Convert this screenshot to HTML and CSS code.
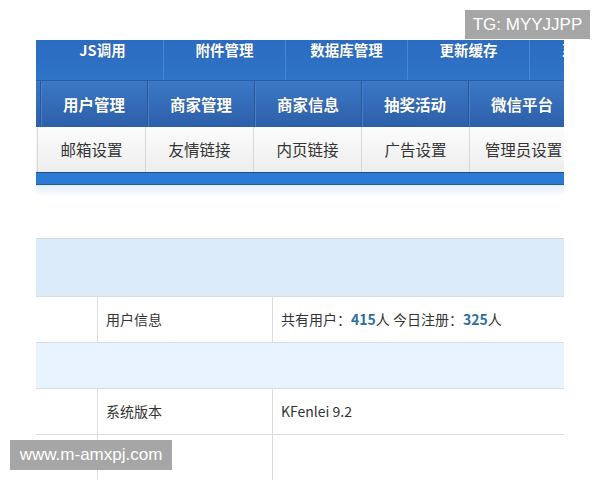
FILE: index.html
```html
<!DOCTYPE html>
<html>
<head>
<meta charset="utf-8">
<link rel="stylesheet" href="styles.css">
</head>
<body>
<div class="page">
  <div class="nav1">
    <div class="n1">JS调用</div>
    <div class="n1">附件管理</div>
    <div class="n1">数据库管理</div>
    <div class="n1">更新缓存</div>
    <div class="n1">系统设置</div>
  </div>
  <div class="nav2">
    <div class="n2">用户管理</div>
    <div class="n2">商家管理</div>
    <div class="n2">商家信息</div>
    <div class="n2">抽奖活动</div>
    <div class="n2">微信平台</div>
  </div>
  <div class="nav3">
    <div class="n3">邮箱设置</div>
    <div class="n3">友情链接</div>
    <div class="n3">内页链接</div>
    <div class="n3">广告设置</div>
    <div class="n3">管理员设置</div>
  </div>
  <div class="bluebar"></div>
  <div class="gap"></div>
  <div class="thead"></div>
  <div class="row">
    <div class="c1"></div>
    <div class="c2">用户信息</div>
    <div class="c3">共有用户：<b class="num">415</b>人 今日注册：<b class="num">325</b>人</div>
  </div>
  <div class="row sub"></div>
  <div class="row">
    <div class="c1"></div>
    <div class="c2">系统版本</div>
    <div class="c3">KFenlei 9.2</div>
  </div>
  <div class="row last">
    <div class="c1"></div>
    <div class="c2"></div>
    <div class="c3"></div>
  </div>
</div>
<div class="wm wm-top">TG: MYYJJPP</div>
<div class="wm wm-bottom">www.m-amxpj.com</div>
</body>
</html>
```
FILE: styles.css
```css
html, body {
  margin: 0;
  padding: 0;
  background: #ffffff;
  height: 480px;
  overflow: hidden;
}
body {
  font-family: "Noto Sans CJK SC", "Noto Sans", sans-serif;
  color: #333333;
}
.page {
  margin-top: 40px;
  margin-left: 36px;
  width: 528px;
  overflow-x: clip;
}
.nav1 {
  height: 40px;
  display: flex;
  padding-left: 6px;
  background: linear-gradient(#2b6cc0, #2f74c6);
  border-bottom: 1px solid #2a5fa8;
}
.n1 {
  flex: 0 0 121px;
  border-right: 1px solid #4a86cc;
  color: #ffffff;
  font-weight: bold;
  font-size: 14.5px;
  line-height: 20px;
  text-align: center;
  white-space: nowrap;
  text-shadow: 0 0 1px rgba(0,0,0,0.3);
}
.nav2 {
  height: 46px;
  display: flex;
  padding-left: 4px;
  background: linear-gradient(#3b78c6, #2d5fa9);
}
.n2 {
  flex: 0 0 106px;
  border-left: 1px solid #2a5596;
  box-shadow: inset 1px 0 0 #4a80c6;
  color: #ffffff;
  font-weight: bold;
  font-size: 15.5px;
  line-height: 46px;
  text-align: center;
  white-space: nowrap;
  text-shadow: 0 0 1px rgba(0,0,0,0.3);
}
.nav3 {
  height: 45px;
  display: flex;
  padding-left: 1px;
  background: linear-gradient(#fcfcfc, #ededed);
}
.n3 {
  flex: 0 0 107px;
  border-left: 1px solid #d8d8d8;
  color: #333333;
  font-size: 15.5px;
  line-height: 45px;
  text-align: center;
  white-space: nowrap;
}
.bluebar {
  height: 11px;
  background: #2c7bd3;
  border-top: 1px solid #1f4f86;
  border-bottom: 1px solid #245a95;
}
.gap {
  height: 53px;
  background: linear-gradient(#e2eefa, #ffffff 12px);
}
.thead {
  height: 57px;
  background: #dcebf9;
  border-top: 1px solid #cdd9e4;
}
.row {
  display: flex;
  height: 45px;
  border-top: 1px solid #d6dde4;
  font-size: 14px;
  line-height: 45px;
}
.row.sub {
  background: #e9f3fd;
}
.row.last {
  height: 60px;
}
.c1 {
  flex: 0 0 61px;
  border-right: 1px solid #d6dde4;
}
.c2 {
  flex: 0 0 166px;
  padding-left: 8px;
  border-right: 1px solid #d6dde4;
}
.c3 {
  flex: 1;
  padding-left: 8px;
}
.num {
  color: #2f6f9f;
  font-weight: bold;
}
.wm {
  position: absolute;
  background: #a6a6a6;
  color: #ffffff;
  font-family: "Liberation Sans", Arial, sans-serif;
  font-size: 17px;
  text-align: center;
}
.wm-top {
  left: 465px;
  top: 10px;
  width: 125px;
  height: 29px;
  line-height: 29px;
}
.wm-bottom {
  left: 10px;
  top: 440px;
  width: 162px;
  height: 30px;
  line-height: 30px;
}
```
